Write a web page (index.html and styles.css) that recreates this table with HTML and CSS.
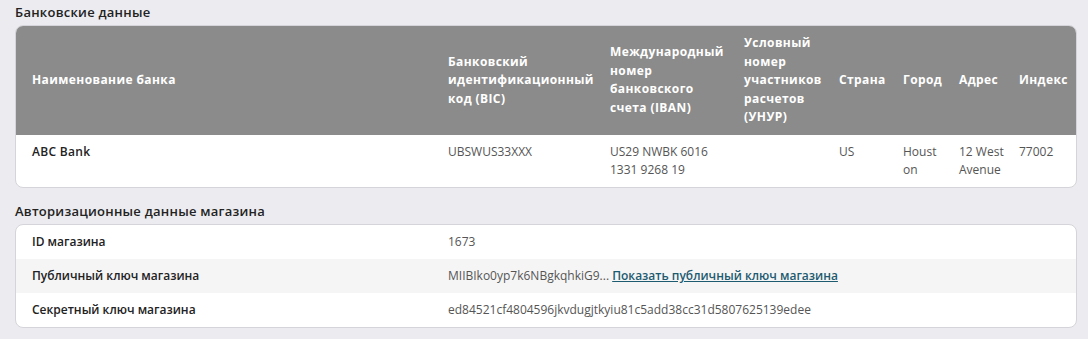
FILE: index.html
```html
<!DOCTYPE html>
<html lang="ru">
<head>
<meta charset="utf-8">
<link rel="stylesheet" href="styles.css">
</head>
<body>
<div class="page">
  <h2 class="section-title first">Банковские данные</h2>
  <div class="card">
    <table class="bank-table">
      <colgroup>
        <col class="c1"><col class="c2"><col class="c3"><col class="c4"><col class="c5"><col class="c6"><col class="c7"><col class="c8">
      </colgroup>
      <thead>
        <tr>
          <th>Наименование банка</th>
          <th>Банковский идентификационный код (BIC)</th>
          <th>Международный номер банковского счета (IBAN)</th>
          <th>Условный номер участников расчетов (УНУР)</th>
          <th>Страна</th>
          <th>Город</th>
          <th>Адрес</th>
          <th>Индекс</th>
        </tr>
      </thead>
      <tbody>
        <tr>
          <td class="name">ABC Bank</td>
          <td>UBSWUS33XXX</td>
          <td>US29 NWBK 6016 1331 9268 19</td>
          <td></td>
          <td>US</td>
          <td class="city">Houst<wbr>on</td>
          <td>12 West Avenue</td>
          <td>77002</td>
        </tr>
      </tbody>
    </table>
  </div>

  <h2 class="section-title">Авторизационные данные магазина</h2>
  <div class="card">
    <div class="kv-row">
      <div class="kv-label">ID магазина</div>
      <div class="kv-value">1673</div>
    </div>
    <div class="kv-row alt">
      <div class="kv-label">Публичный ключ магазина</div>
      <div class="kv-value">MIIBIko0yp7k6NBgkqhkiG9... <a class="link" href="#">Показать публичный ключ магазина</a></div>
    </div>
    <div class="kv-row">
      <div class="kv-label">Секретный ключ магазина</div>
      <div class="kv-value">ed84521cf4804596jkvdugjtkyiu81c5add38cc31d5807625139edee</div>
    </div>
  </div>
</div>
</body>
</html>
```

FILE: styles.css
```css
html, body {
  margin: 0;
  padding: 0;
  background: #ececf0;
}
body {
  font-family: "Open Sans", "Noto Sans", sans-serif;
  color: #222;
  font-size: 12px;
}
.page {
  padding: 0 11px 12px 15px;
}
.section-title {
  font-size: 13px;
  font-weight: 600;
  line-height: 18px;
  letter-spacing: 0.25px;
  margin: 14px 0 4px;
  color: #222;
}
.section-title.first {
  margin-top: 3px;
}
.card {
  background: #fff;
  border: 1px solid #d4d4da;
  border-radius: 8px;
  overflow: hidden;
}
.bank-table {
  width: 100%;
  border-collapse: collapse;
  table-layout: fixed;
}
.c1 { width: 424px; }
.c2 { width: 162px; }
.c3 { width: 134px; }
.c4 { width: 95px; }
.c5 { width: 64px; }
.c6 { width: 56px; }
.c7 { width: 60px; }
.c8 { width: auto; }
.bank-table th {
  background: #8b8b8b;
  color: #fff;
  font-weight: 700;
  letter-spacing: 0.4px;
  text-align: left;
  vertical-align: middle;
  line-height: 18.5px;
  padding: 8px 2px 8px 8px;
}
.bank-table td {
  vertical-align: top;
  line-height: 18px;
  padding: 8px 0 8px 8px;
  color: #555;
  font-weight: 400;
}
.bank-table th:first-child,
.bank-table td:first-child {
  padding-left: 16px;
}
.bank-table td.name {
  color: #222;
  font-weight: 600;
  letter-spacing: 0.3px;
}
.bank-table td.city {
  padding-right: 10px;
}
.kv-row {
  display: grid;
  grid-template-columns: 416px 1fr;
  align-items: center;
  height: 34px;
  padding: 0 16px;
}
.kv-row.alt {
  background: #f5f5f6;
}
.kv-label {
  font-weight: 600;
  color: #222;
}
.kv-value {
  color: #555;
}
.link {
  color: #1d5b70;
  font-weight: 600;
  text-decoration: underline;
}
```
